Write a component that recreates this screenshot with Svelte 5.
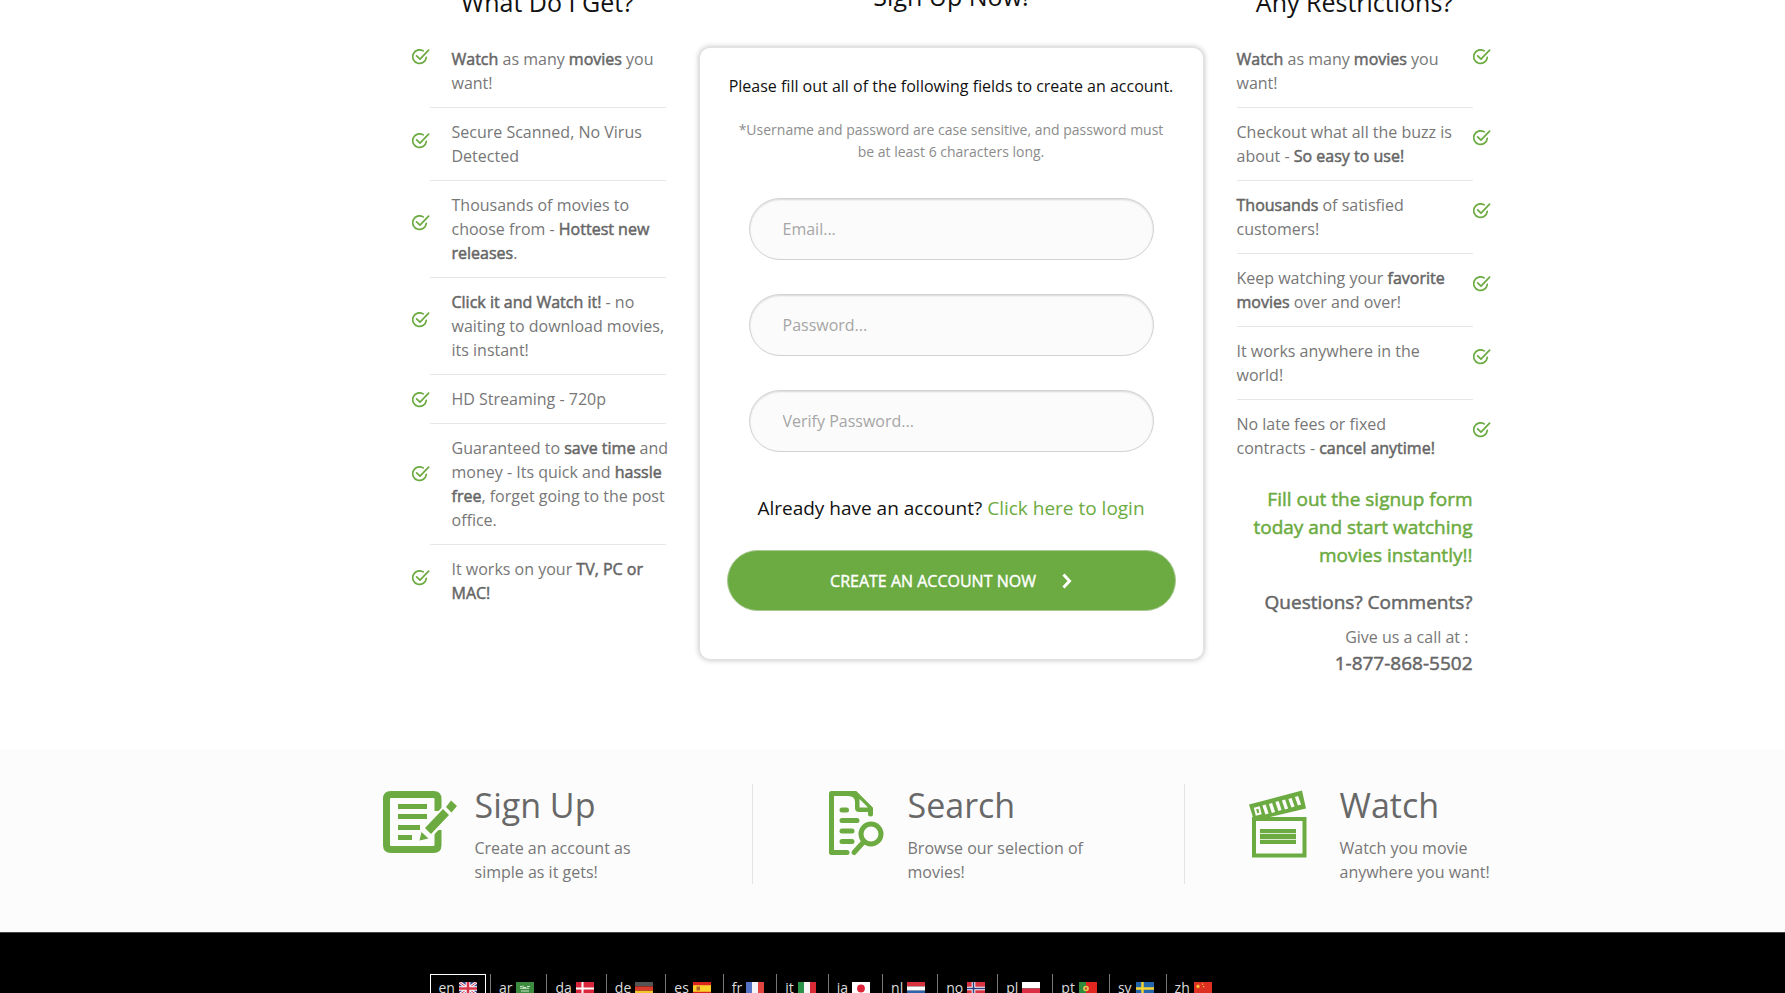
<script>
  const benefits = [
    '<b>Watch</b> as many <b>movies</b> you want!',
    'Secure Scanned, No Virus Detected',
    'Thousands of movies to choose from - <b>Hottest new releases</b>.',
    '<b>Click it and Watch it!</b> - no waiting to download movies, its instant!',
    'HD Streaming - 720p',
    'Guaranteed to <b>save time</b> and money - Its quick and <b>hassle free</b>, forget going to the post office.',
    'It works on your <b>TV, PC or MAC!</b>'
  ];
  const restrictions = [
    '<b>Watch</b> as many <b>movies</b> you want!',
    'Checkout what all the buzz is about - <b>So easy to use!</b>',
    '<b>Thousands</b> of satisfied customers!',
    'Keep watching your <b>favorite movies</b> over and over!',
    'It works anywhere in the world!',
    'No late fees or fixed contracts - <b>cancel anytime!</b>'
  ];
  const fields = [
    { id: 'email', type: 'email', label: 'Email...' },
    { id: 'password', type: 'password', label: 'Password...' },
    { id: 'verify', type: 'password', label: 'Verify Password...' }
  ];
  const languages = ['en', 'ar', 'da', 'de', 'es', 'fr', 'it', 'ja', 'nl', 'no', 'pl', 'pt', 'sv', 'zh'];
</script>

{#snippet check()}
  <span class="tick">
    <svg width="18" height="16" viewBox="0 0 18 16" fill="none" stroke="#6cab41" stroke-width="1.7" stroke-linecap="round" stroke-linejoin="round" aria-hidden="true">
      <path d="M11.2 1.9A6.8 6.8 0 1 0 14.3 8.4" />
      <path d="M4.6 6.8L8 10.2L16.6 1.2" />
    </svg>
  </span>
{/snippet}

{#snippet flag(code)}
  <svg class="flag" width="18" height="13" viewBox="0 0 18 13" aria-hidden="true">
    {#if code === 'en'}
      <path fill="#3d4a94" d="M0 0h18v13H0z" />
      <path stroke="#fff" stroke-width="3" d="M0 0l18 13M18 0L0 13" />
      <path stroke="#d8344c" stroke-width="1" d="M0 0l18 13M18 0L0 13" />
      <path stroke="#fff" stroke-width="4.6" d="M9 0v13M0 6.5h18" />
      <path stroke="#d8344c" stroke-width="2.6" d="M9 0v13M0 6.5h18" />
    {:else if code === 'ar'}
      <path fill="#3c8b3f" d="M0 0h18v13H0z" />
      <path stroke="#cfe5cf" stroke-width="1" fill="none" d="M4 4.5h2M7 3.5v2h3M11 4.5h3M4 6.3h9M5 9h8" />
    {:else if code === 'da'}
      <path fill="#d9263b" d="M0 0h18v13H0z" />
      <path stroke="#fff" stroke-width="2" d="M6.5 0v13M0 6.5h18" />
    {:else if code === 'de'}
      <path fill="#555" d="M0 0h18v4.4H0z" /><path fill="#dd3a2c" d="M0 4.4h18v4.3H0z" /><path fill="#f5c62c" d="M0 8.7h18V13H0z" />
    {:else if code === 'es'}
      <path fill="#d8251d" d="M0 0h18v13H0z" /><path fill="#fbd02a" d="M0 3.2h18v6.6H0z" /><path fill="#b5652a" d="M3.5 4.5h3.5v4H3.5z" />
    {:else if code === 'fr'}
      <path fill="#5573c4" d="M0 0h6v13H0z" /><path fill="#f4f4f8" d="M6 0h6v13H6z" /><path fill="#e2453f" d="M12 0h6v13h-6z" />
    {:else if code === 'it'}
      <path fill="#2b9348" d="M0 0h6v13H0z" /><path fill="#f6f6f6" d="M6 0h6v13H6z" /><path fill="#d92b35" d="M12 0h6v13h-6z" />
    {:else if code === 'ja'}
      <path fill="#fff" d="M0 0h18v13H0z" /><circle cx="9" cy="6.5" r="3.9" fill="#dc2337" />
    {:else if code === 'nl'}
      <path fill="#d9323f" d="M0 0h18v4.4H0z" /><path fill="#fff" d="M0 4.4h18v4.3H0z" /><path fill="#2c62ae" d="M0 8.7h18V13H0z" />
    {:else if code === 'no'}
      <path fill="#d83341" d="M0 0h18v13H0z" /><path stroke="#fff" stroke-width="3.6" d="M6.5 0v13M0 6.5h18" /><path stroke="#2d3f83" stroke-width="1.6" d="M6.5 0v13M0 6.5h18" />
    {:else if code === 'pl'}
      <path fill="#fff" d="M0 0h18v6.5H0z" /><path fill="#dc2c42" d="M0 6.5h18V13H0z" />
    {:else if code === 'pt'}
      <path fill="#2f8c3c" d="M0 0h7v13H0z" /><path fill="#e0261f" d="M7 0h11v13H7z" /><circle cx="7" cy="6.5" r="2.8" fill="#e0cf55" /><circle cx="7" cy="6.5" r="1.2" fill="#d5452c" />
    {:else if code === 'sv'}
      <path fill="#2467ad" d="M0 0h18v13H0z" /><path stroke="#f9d531" stroke-width="2.4" d="M6.5 0v13M0 6.5h18" />
    {:else}
      <path fill="#dd2f22" d="M0 0h18v13H0z" /><path fill="#f8d33a" d="M4 2l.7 1.6 1.7.1-1.3 1.1.4 1.7L4 5.6l-1.5.9.4-1.7-1.3-1.1 1.7-.1zM8 1.5h1.2v1.2H8zM9 4h1.2v1.2H9z" />
    {/if}
  </svg>
{/snippet}

<div class="page">
  <main class="signup">
    <section class="column">
      <h2>What Do I Get?</h2>
      <ul class="list">
        {#each benefits as item}
          <li>{@render check()}<div class="item"><p>{@html item}</p></div></li>
        {/each}
      </ul>
    </section>

    <section class="center">
      <h2>Sign Up Now!</h2>
      <form class="card" onsubmit={(e) => e.preventDefault()}>
        <p class="lead">Please fill out all of the following fields to create an account.</p>
        <p class="note">*Username and password are case sensitive, and password must be at least 6 characters long.</p>
        <div class="fields">
          {#each fields as field}
            <input id={field.id} type={field.type} placeholder={field.label} aria-label={field.label} />
          {/each}
        </div>
        <p class="login">Already have an account? <a href="#login">Click here to login</a></p>
        <button type="submit">
          CREATE AN ACCOUNT NOW
          <svg width="10" height="16" viewBox="0 0 10 16" fill="none" stroke="#fff" stroke-width="3" aria-hidden="true"><path d="M1.5 1.5L7.5 8L1.5 14.5" /></svg>
        </button>
      </form>
    </section>

    <section class="column right">
      <h2>Any Restrictions?</h2>
      <ul class="list">
        {#each restrictions as item}
          <li><div class="item"><p>{@html item}</p></div>{@render check()}</li>
        {/each}
      </ul>
      <div class="contact">
        <p class="cta">Fill out the signup form today and start watching movies instantly!!</p>
        <p class="question">Questions? Comments?</p>
        <p class="call">Give us a call at :&nbsp;</p>
        <p class="phone">1-877-868-5502</p>
      </div>
    </section>
  </main>

  <section class="steps">
    <div class="steps-inner">
      <article>
        <svg width="74" height="68" viewBox="0 0 74 68" aria-hidden="true">
          <path fill="none" stroke="#6cab41" stroke-width="7" d="M55 21V9q0-4.500-4.500-4.500H8Q3.500 4.500 3.500 9v46q0 4.500 4.500 4.500h42.500q4.500 0 4.500-4.500V40" />
          <path fill="#6cab41" d="M15 14h29v5H15zM15 24h29v5H15zM15 35h22v5H15zM15 45h14v5H15z" />
          <path stroke="#fcfcfc" stroke-width="13" d="M38 49L72 13" />
          <path fill="#6cab41" d="M42 38L60 19l6 6-18 19zM63 17l5-6.500 6 5.500-5.500 6.500zM38.500 42l7 6.500-9 2z" />
        </svg>
        <div><h3>Sign Up</h3><p>Create an account as<br />simple as it gets!</p></div>
      </article>
      <article>
        <svg width="74" height="68" viewBox="0 0 74 68" fill="none" stroke="#6cab41" stroke-width="5" stroke-linecap="round" stroke-linejoin="round" aria-hidden="true">
          <path d="M31 62.500H15.500V3.500H39L54.500 19V24" />
          <path fill="#6cab41" stroke="none" d="M32 1h8l17 17v4H43q-4 0-4-4V12Q39 6 32 6z" />
          <path fill="#fcfcfc" stroke="none" d="M43.500 9l8.500 8.500h-8.500z" />
          <path d="M26 20h4.500M26 30.500h15M26 41h10M26 51.500h10" />
          <circle cx="55" cy="44" r="10" />
          <path d="M47.500 52L38 62.500" />
        </svg>
        <div><h3>Search</h3><p>Browse our selection of<br />movies!</p></div>
      </article>
      <article>
        <svg width="74" height="68" viewBox="0 0 74 68" aria-hidden="true">
          <path fill="#6cab41" d="M1 14.500L54 .500 58 18.500 20 27.500H5z" />
          <path fill="none" stroke="#6cab41" stroke-width="4" d="M6 29h50.500v36.500H6z" />
          <path fill="#6cab41" d="M12 39h36v15H12z" />
          <path stroke="#dcecd0" stroke-width="1" d="M12 43.500h36M12 49.500h36" />
          <path stroke="#fcfcfc" stroke-width="3.400" d="M16 15l3 9M22.500 13.500l3 9M29 11.500l3 9M35.500 10l3 9M42 8.500l3 8.500M48.500 6.500l3 8.500" />
          <path fill="none" stroke="#fcfcfc" stroke-width="2" d="M7 18.500l4-1 1.500 6-4 1z" />
        </svg>
        <div><h3>Watch</h3><p>Watch you movie<br />anywhere you want!</p></div>
      </article>
    </div>
  </section>

  <footer>
    <nav aria-label="Language">
      {#each languages as code, i}
        <a href={'#' + code} class:active={i === 0}>{code} {@render flag(code)}</a>
      {/each}
    </nav>
  </footer>
</div>

<style>
  :global(body) { background: #fff; }
  .page {
    height: 100vh;
    overflow: hidden;
    display: flex;
    flex-direction: column;
    font-family: 'Open Sans', 'Noto Sans', sans-serif;
    font-size: 16px;
    line-height: 24px;
    color: #777;
  }
  h2, h3, p, ul { margin: 0; padding: 0; font-weight: 400; }
  ul { list-style: none; }
  .signup {
    flex: none;
    display: grid;
    grid-template-columns: 254px minmax(0, 1fr) 254px;
    gap: 32px;
    width: 1079px;
    box-sizing: border-box;
    margin: -18px 0 0 calc(50% - 481px);
    padding-bottom: 73px;
  }
  h2 {
    color: #111;
    font-size: 25px;
    line-height: 40px;
    text-align: center;
  }
  .column h2 { margin-bottom: 13px; padding-left: 18px; }
  .right h2 { padding: 0 18px 0 0; }
  .list { --before: 35; --after: 65; }
  .right .list { --before: 29; --after: 71; }
  .list li { display: flex; }
  .list li:first-child { --before: 12; --after: 88; }
  .item {
    flex: 1;
    min-width: 0;
    padding: 12px 0 12px 22px;
    border-bottom: 1px solid #e6e6e6;
  }
  .item p { margin-right: -8px; }
  .right .item { padding: 12px 17px 12px 0; }
  .right .item p { margin-right: 0; }
  .list li:last-child .item { border-bottom: 0; }
  .tick { width: 18px; display: flex; flex-direction: column; }
  .tick::before { content: ''; flex: var(--before) 0 8px; }
  .tick::after { content: ''; flex: var(--after) 0 0px; }
  .tick svg { display: block; flex: none; }
  .list :global(b) {
    font-weight: 400;
    color: #666;
    -webkit-text-stroke: 0.5px #666;
  }
  .contact { padding: 13px 18px 0 0; text-align: right; }
  .cta, .question, .phone { font-size: 19px; line-height: 28px; }
  .cta { color: #6cab41; -webkit-text-stroke: 0.5px #6cab41; padding: 0 0 19px; }
  .question, .phone { color: #666; -webkit-text-stroke: 0.5px #666; }
  .question { margin-bottom: 9px; }

  .center h2 { line-height: 28px; margin-bottom: 36px; }
  .card {
    box-sizing: border-box;
    padding: 24px 27px 48px;
    border: 2px solid #e2e2e2;
    border-radius: 12px;
    box-shadow: 0 0 5px rgba(0, 0, 0, 0.18);
    text-align: center;
    color: #111;
  }
  .lead { line-height: 28px; margin-bottom: 19px; }
  .note { font-size: 14px; line-height: 22px; color: #8c8c8c; padding: 0 8px; margin-bottom: 35px; }
  .fields { display: grid; gap: 34px; padding: 0 22px; }
  input {
    box-sizing: border-box;
    width: 100%;
    height: 62px;
    padding: 0 33px;
    border: 1px solid #d2d2d2;
    border-radius: 31px;
    background: #fbfbfb;
    box-shadow: inset 0 1px 2px rgba(0, 0, 0, 0.14);
    font: inherit;
    color: #555;
  }
  input::placeholder { color: #a6a6a6; opacity: 1; }
  .login { font-size: 19px; line-height: 28px; margin: 42px 0 28px; }
  .login a { color: #6cab41; text-decoration: none; }
  button {
    display: flex;
    align-items: center;
    justify-content: center;
    gap: 26px;
    width: 100%;
    height: 61px;
    border: 1px solid #a9c894;
    border-radius: 31px;
    background: #6cab41;
    color: #fff;
    font: inherit;
    -webkit-text-stroke: 0.4px #fff;
  }

  .steps { flex: none; background: #fcfcfc; padding: 34px 0 48px; }
  .steps-inner {
    display: grid;
    grid-template-columns: repeat(3, 432px);
    margin-left: calc(50% - 573px);
  }
  article {
    display: flex;
    gap: 18px;
    height: 100px;
    padding: 0 0 0 63px;
  }
  article + article { border-left: 1px solid #e4e4e4; }
  article svg { flex: none; margin-top: 6px; }
  h3 { font-size: 34px; line-height: 42px; margin-bottom: 10px; color: #686868; }
  article p { color: #777; }

  footer { flex: 1 0 auto; background: #000; border-top: 1px solid #444; padding-top: 41px; }
  nav { display: flex; margin-left: calc(50% - 463px); height: 28px; font-size: 14px; line-height: 27px; }
  nav a {
    display: flex;
    gap: 4px;
    padding: 0 12px 0 8px;
    border: solid #777;
    border-width: 0 0 0 1px;
    color: #ddd;
    text-decoration: none;
  }
  nav a.active { border: 1px solid #fff; padding: 0 8px; margin-right: 4px; line-height: 25px; }
  .flag { margin-top: 8px; }
  .active .flag { margin-top: 7px; }
</style>
